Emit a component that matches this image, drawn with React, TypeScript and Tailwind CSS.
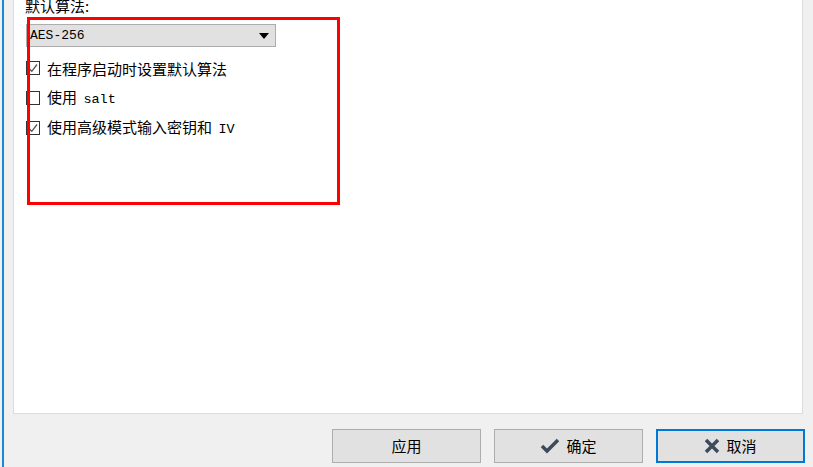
import React from "react";

const cjk = { fontFamily: '"Noto Sans CJK SC", "Liberation Sans", sans-serif' };
const mono = { fontFamily: '"Liberation Mono", "Noto Sans CJK SC", monospace' };

function Check({ checked, label }: { checked: boolean; label: React.ReactNode }) {
    return (
        <div className="flex flex-row items-center h-[30px]">
            <div className="w-[14px] h-[14px] border border-[#333333] bg-white flex items-center justify-center">
                {checked && (
                    <svg width="12" height="12" viewBox="0 0 12 12">
                        <path d="M2 6.5 L4.8 9.3 L10 2.5" stroke="#555" strokeWidth="1.3" fill="none" />
                    </svg>
                )}
            </div>
            <span className="ml-[7px] text-[15px] text-black leading-none" style={cjk}>
                {label}
            </span>
        </div>
    );
}

function Button({ icon, label, active }: { icon?: React.ReactNode; label: string; active?: boolean }) {
    return (
        <button
            className={
                active
                    ? "w-[149px] h-[34px] bg-[#e1e1e1] border-2 border-[#0078d7] flex flex-row items-center justify-center gap-[6px]"
                    : "w-[149px] h-[34px] bg-[#e1e1e1] border border-[#adadad] flex flex-row items-center justify-center gap-[6px]"
            }
        >
            {icon}
            <span className="text-[15px] text-black" style={cjk}>
                {label}
            </span>
        </button>
    );
}

export default function App() {
    return (
        <div className="w-[813px] h-[467px] bg-[#f0f0f0] relative overflow-hidden flex flex-row">
            <div className="w-[2px] h-full bg-[#f0f0f0]" />
            <div className="w-[2px] h-full bg-[#1a8ad8]" />
            <div className="flex-1 flex flex-col pl-[9px] pr-[10px]">
                <div className="w-[790px] h-[414px] bg-white border-x border-b border-[#dcdcdc] flex flex-col pl-[11px]">
                    <div className="text-[15px] text-black leading-none mt-[-2px]" style={cjk}>
                        默认算法:
                    </div>
                    <div className="mt-[11px] ml-[1px] w-[250px] h-[23px] bg-[#e1e1e1] border border-[#adadad] flex flex-row items-center justify-between px-[3px]">
                        <span className="text-[13px] text-black" style={mono}>AES-256</span>
                        <svg width="10" height="6" viewBox="0 0 10 6" className="mr-[3px]">
                            <path d="M0 0 L10 0 L5 6 Z" fill="#000" />
                        </svg>
                    </div>
                    <div className="flex flex-col mt-[6px] ml-[1px]">
                        <Check checked label="在程序启动时设置默认算法" />
                        <Check
                            checked={false}
                            label={
                                <>
                                    使用 <span className="text-[13.5px] ml-[3px]" style={mono}>salt</span>
                                </>
                            }
                        />
                        <Check
                            checked
                            label={
                                <>
                                    使用高级模式输入密钥和 <span className="text-[13.5px] ml-[3px]" style={mono}>IV</span>
                                </>
                            }
                        />
                    </div>
                </div>
                <div className="flex flex-row justify-end gap-[13px] mt-[15px] mr-[-2px]">
                    <Button label="应用" />
                    <Button
                        label="确定"
                        icon={
                            <svg width="20" height="16" viewBox="0 0 20 16">
                                <path d="M2 8 L7 13 L18 2" stroke="#3d4a5c" strokeWidth="3.5" fill="none" strokeLinejoin="miter" />
                            </svg>
                        }
                    />
                    <Button
                        active
                        label="取消"
                        icon={
                            <svg width="16" height="16" viewBox="0 0 16 16">
                                <path d="M2 2 L14 14 M14 2 L2 14" stroke="#3d4a5c" strokeWidth="3.5" fill="none" />
                            </svg>
                        }
                    />
                </div>
            </div>
            <div className="absolute left-[27px] top-[17px] w-[313px] h-[188px] border-[3px] border-[#ff0000]" />
        </div>
    );
}
